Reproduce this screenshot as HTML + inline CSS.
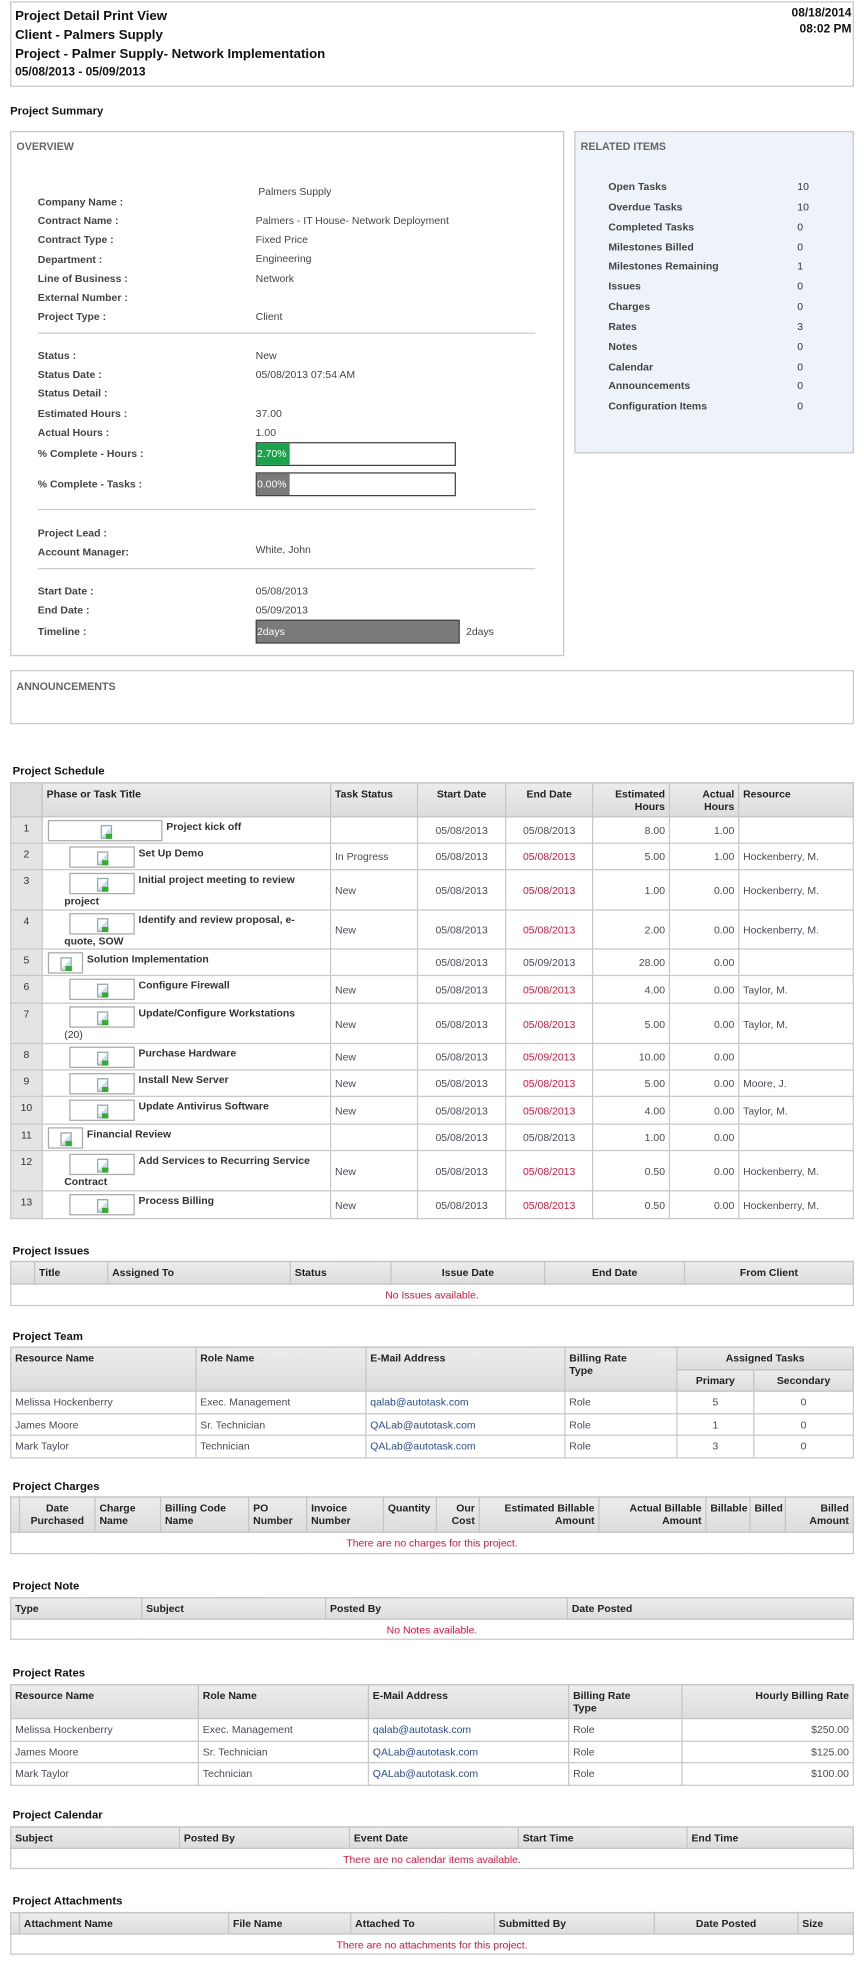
<!DOCTYPE html>
<html><head><meta charset="utf-8"><style>
*{box-sizing:border-box;margin:0;padding:0}
html,body{width:864px;height:1975px;overflow:hidden;background:#fff}
#w{position:absolute;left:0;top:0;width:686px;height:1568px;transform:scale(1.2595);transform-origin:0 0;font-family:"Liberation Sans",sans-serif;font-size:8.3px;color:#444}
.a{position:absolute;white-space:nowrap}
.b{font-weight:bold}
.box{position:absolute;border:1px solid #c8c8c8}
.h{position:absolute;left:10px;font-weight:bold;font-size:9px;color:#111}
table{position:absolute;left:8px;width:670px;border-collapse:collapse;table-layout:fixed;border:1px solid #bbb}
th{background:linear-gradient(#ececec,#dcdcdc);color:#222;font-weight:bold;text-align:left;vertical-align:top;padding:3px 3px;border:1px solid #c4c4c4;line-height:10px}
td{border:1px solid #c8c8c8;padding:0 3px;color:#4a4a55;vertical-align:middle}
.r{text-align:right}.c{text-align:center}
.red{color:#e0103a}
.lk{color:#2b4b8c}
.nd{background:#e4e4e4;color:#333;text-align:center;vertical-align:top;padding-top:3px}
.ib{display:inline-block;width:52px;height:17px;border:1px solid #aaa;vertical-align:top;position:relative;margin-right:3px;background:#fff}
.ib i{position:absolute;left:50%;top:3px;width:9px;height:11px;margin-left:-4px;border:1px solid #9aa;background:linear-gradient(135deg,#fff 50%,#cde 50%)}
.ib i:after{content:"";position:absolute;right:-1px;bottom:-1px;width:5px;height:4px;background:#3a3}
.tt{font-weight:bold;color:#333;vertical-align:top;padding-top:2px;line-height:11px}
.sc td{font-size:8.3px}
</style></head><body><div id="w">

<div class="box" style="left:8px;top:1px;width:670px;height:68px"></div>
<div class="a b" style="left:12px;top:6px;font-size:10.5px;color:#111;line-height:15px">Project Detail Print View<br>Client - Palmers Supply<br>Project - Palmer Supply- Network Implementation</div>
<div class="a b" style="left:12px;top:52px;font-size:9.5px;color:#111">05/08/2013 - 05/09/2013</div>
<div class="a b" style="right:10px;top:4px;font-size:9.5px;color:#111;text-align:right;line-height:13px">08/18/2014<br>08:02 PM</div>

<div class="h" style="left:8px;top:83px">Project Summary</div>

<div class="box" style="left:8px;top:104px;width:440px;height:417px"></div>
<div class="a b" style="left:13px;top:111px;color:#666;font-size:8.5px">OVERVIEW</div>
<div class="a b" style="left:30px;top:153px;line-height:15.2px">Company Name :<br>Contract Name :<br>Contract Type :<br>Department :<br>Line of Business :<br>External Number :<br>Project Type :</div>
<div class="a" style="left:205px;top:147px">Palmers Supply</div>
<div class="a" style="left:203px;top:168px;line-height:15.2px">Palmers - IT House- Network Deployment<br>Fixed Price<br>Engineering<br>Network<br><br>Client</div>
<div class="a" style="left:30px;top:264px;width:395px;border-top:1px solid #ccc"></div>
<div class="a b" style="left:30px;top:275px;line-height:15.2px">Status :<br>Status Date :<br>Status Detail :<br>Estimated Hours :<br>Actual Hours :</div>
<div class="a" style="left:203px;top:275px;line-height:15.2px">New<br>05/08/2013 07:54 AM<br><br>37.00<br>1.00</div>
<div class="a b" style="left:30px;top:355px">% Complete - Hours :</div>
<div class="a" style="left:203px;top:351px;width:159px;height:19px;border:1px solid #444;background:#fff"><div style="width:26px;height:17px;background:#1aa34a;color:#fff;line-height:17px">2.70%</div></div>
<div class="a b" style="left:30px;top:379px">% Complete - Tasks :</div>
<div class="a" style="left:203px;top:375px;width:159px;height:19px;border:1px solid #444;background:#fff"><div style="width:26px;height:17px;background:#7a7a7a;color:#fff;line-height:17px">0.00%</div></div>
<div class="a" style="left:30px;top:404px;width:395px;border-top:1px solid #ccc"></div>
<div class="a b" style="left:30px;top:416px;line-height:15.2px">Project Lead :<br>Account Manager:</div>
<div class="a" style="left:203px;top:431px">White, John</div>
<div class="a" style="left:30px;top:451px;width:395px;border-top:1px solid #ccc"></div>
<div class="a b" style="left:30px;top:462px;line-height:15.2px">Start Date :<br>End Date :</div>
<div class="a" style="left:203px;top:462px;line-height:15.2px">05/08/2013<br>05/09/2013</div>
<div class="a b" style="left:30px;top:496px">Timeline :</div>
<div class="a" style="left:203px;top:492px;width:162px;height:19px;border:1px solid #444;background:#7a7a7a;color:#fff;line-height:17px">2days</div>
<div class="a" style="left:370px;top:496px">2days</div>

<div class="box" style="left:456px;top:104px;width:222px;height:256px;background:#eef3fa"></div>
<div class="a b" style="left:461px;top:111px;color:#666;font-size:8.5px">RELATED ITEMS</div>
<div class="a b" style="left:483px;top:141px;line-height:15.85px">Open Tasks<br>Overdue Tasks<br>Completed Tasks<br>Milestones Billed<br>Milestones Remaining<br>Issues<br>Charges<br>Rates<br>Notes<br>Calendar<br>Announcements<br>Configuration Items</div>
<div class="a" style="left:633px;top:141px;line-height:15.85px;color:#333">10<br>10<br>0<br>0<br>1<br>0<br>0<br>3<br>0<br>0<br>0<br>0</div>

<div class="box" style="left:8px;top:532px;width:670px;height:43px"></div>
<div class="a b" style="left:13px;top:540px;color:#666;font-size:8.5px">ANNOUNCEMENTS</div>

<div class="h" style="top:607px">Project Schedule</div>
<table class="sc" style="top:621px">
<colgroup><col style="width:25px"><col style="width:229px"><col style="width:69px"><col style="width:70px"><col style="width:69px"><col style="width:61px"><col style="width:55px"><col></colgroup>
<tr style="height:27px"><th style="background:#ddd"></th><th>Phase or Task Title</th><th>Task Status</th><th class="c">Start Date</th><th class="c">End Date</th><th class="r">Estimated Hours</th><th class="r">Actual Hours</th><th>Resource</th></tr>
<tr style="height:21px"><td class="nd">1</td><td class="tt" style="padding-left:4px"><span class="ib" style="width:91px"><i></i></span>Project kick off</td><td></td><td class="c">05/08/2013</td><td class="c">05/08/2013</td><td class="r">8.00</td><td class="r">1.00</td><td></td></tr>
<tr style="height:21px"><td class="nd">2</td><td class="tt" style="padding-left:21px"><span class="ib"><i></i></span>Set Up Demo</td><td>In Progress</td><td class="c">05/08/2013</td><td class="c red">05/08/2013</td><td class="r">5.00</td><td class="r">1.00</td><td>Hockenberry, M.</td></tr>
<tr style="height:32px"><td class="nd">3</td><td class="tt" style="padding-left:21px"><span class="ib"><i></i></span>Initial project meeting to review<br><span style="margin-left:-4px">project</span></td><td>New</td><td class="c">05/08/2013</td><td class="c red">05/08/2013</td><td class="r">1.00</td><td class="r">0.00</td><td>Hockenberry, M.</td></tr>
<tr style="height:31px"><td class="nd">4</td><td class="tt" style="padding-left:21px"><span class="ib"><i></i></span>Identify and review proposal, e-<br><span style="margin-left:-4px">quote, SOW</span></td><td>New</td><td class="c">05/08/2013</td><td class="c red">05/08/2013</td><td class="r">2.00</td><td class="r">0.00</td><td>Hockenberry, M.</td></tr>
<tr style="height:21px"><td class="nd">5</td><td class="tt" style="padding-left:4px"><span class="ib" style="width:28px"><i></i></span>Solution Implementation</td><td></td><td class="c">05/08/2013</td><td class="c">05/09/2013</td><td class="r">28.00</td><td class="r">0.00</td><td></td></tr>
<tr style="height:22px"><td class="nd">6</td><td class="tt" style="padding-left:21px"><span class="ib"><i></i></span>Configure Firewall</td><td>New</td><td class="c">05/08/2013</td><td class="c red">05/08/2013</td><td class="r">4.00</td><td class="r">0.00</td><td>Taylor, M.</td></tr>
<tr style="height:32px"><td class="nd">7</td><td class="tt" style="padding-left:21px"><span class="ib"><i></i></span>Update/Configure Workstations<br><span style="margin-left:-4px;font-weight:normal">(20)</span></td><td>New</td><td class="c">05/08/2013</td><td class="c red">05/08/2013</td><td class="r">5.00</td><td class="r">0.00</td><td>Taylor, M.</td></tr>
<tr style="height:21px"><td class="nd">8</td><td class="tt" style="padding-left:21px"><span class="ib"><i></i></span>Purchase Hardware</td><td>New</td><td class="c">05/08/2013</td><td class="c red">05/09/2013</td><td class="r">10.00</td><td class="r">0.00</td><td></td></tr>
<tr style="height:21px"><td class="nd">9</td><td class="tt" style="padding-left:21px"><span class="ib"><i></i></span>Install New Server</td><td>New</td><td class="c">05/08/2013</td><td class="c red">05/08/2013</td><td class="r">5.00</td><td class="r">0.00</td><td>Moore, J.</td></tr>
<tr style="height:22px"><td class="nd">10</td><td class="tt" style="padding-left:21px"><span class="ib"><i></i></span>Update Antivirus Software</td><td>New</td><td class="c">05/08/2013</td><td class="c red">05/08/2013</td><td class="r">4.00</td><td class="r">0.00</td><td>Taylor, M.</td></tr>
<tr style="height:21px"><td class="nd">11</td><td class="tt" style="padding-left:4px"><span class="ib" style="width:28px"><i></i></span>Financial Review</td><td></td><td class="c">05/08/2013</td><td class="c">05/08/2013</td><td class="r">1.00</td><td class="r">0.00</td><td></td></tr>
<tr style="height:32px"><td class="nd">12</td><td class="tt" style="padding-left:21px"><span class="ib"><i></i></span>Add Services to Recurring Service<br><span style="margin-left:-4px">Contract</span></td><td>New</td><td class="c">05/08/2013</td><td class="c red">05/08/2013</td><td class="r">0.50</td><td class="r">0.00</td><td>Hockenberry, M.</td></tr>
<tr style="height:22px"><td class="nd">13</td><td class="tt" style="padding-left:21px"><span class="ib"><i></i></span>Process Billing</td><td>New</td><td class="c">05/08/2013</td><td class="c red">05/08/2013</td><td class="r">0.50</td><td class="r">0.00</td><td>Hockenberry, M.</td></tr>
</table>

<div class="h" style="top:988px">Project Issues</div>
<table style="top:1001px">
<colgroup><col style="width:19px"><col style="width:58px"><col style="width:145px"><col style="width:80px"><col style="width:122px"><col style="width:111px"><col></colgroup>
<tr style="height:18px"><th></th><th>Title</th><th>Assigned To</th><th>Status</th><th class="c">Issue Date</th><th class="c">End Date</th><th class="c">From Client</th></tr>
<tr style="height:17px"><td colspan="7" class="c red">No Issues available.</td></tr>
</table>

<div class="h" style="top:1056px">Project Team</div>
<table style="top:1069px">
<colgroup><col style="width:147px"><col style="width:135px"><col style="width:158px"><col style="width:89px"><col style="width:61px"><col></colgroup>
<tr style="height:18px"><th rowspan="2">Resource Name</th><th rowspan="2">Role Name</th><th rowspan="2">E-Mail Address</th><th rowspan="2">Billing Rate<br>Type</th><th colspan="2" class="c">Assigned Tasks</th></tr>
<tr style="height:16px"><th class="c">Primary</th><th class="c">Secondary</th></tr>
<tr style="height:17.5px"><td>Melissa Hockenberry</td><td>Exec. Management</td><td class="lk">qalab@autotask.com</td><td>Role</td><td class="c">5</td><td class="c">0</td></tr>
<tr style="height:17.5px"><td>James Moore</td><td>Sr. Technician</td><td class="lk">QALab@autotask.com</td><td>Role</td><td class="c">1</td><td class="c">0</td></tr>
<tr style="height:17.5px"><td>Mark Taylor</td><td>Technician</td><td class="lk">QALab@autotask.com</td><td>Role</td><td class="c">3</td><td class="c">0</td></tr>
</table>

<div class="h" style="top:1175px">Project Charges</div>
<table style="top:1188px">
<colgroup><col style="width:7px"><col style="width:60px"><col style="width:52px"><col style="width:70px"><col style="width:46px"><col style="width:61px"><col style="width:42px"><col style="width:34px"><col style="width:95px"><col style="width:85px"><col style="width:35px"><col style="width:28px"><col></colgroup>
<tr style="height:28px"><th></th><th class="c">Date Purchased</th><th>Charge Name</th><th>Billing Code Name</th><th>PO Number</th><th>Invoice Number</th><th>Quantity</th><th class="r">Our Cost</th><th class="r">Estimated Billable Amount</th><th class="r">Actual Billable Amount</th><th>Billable</th><th>Billed</th><th class="r">Billed Amount</th></tr>
<tr style="height:17px"><td colspan="13" class="c red">There are no charges for this project.</td></tr>
</table>

<div class="h" style="top:1254px">Project Note</div>
<table style="top:1268px">
<colgroup><col style="width:104px"><col style="width:146px"><col style="width:192px"><col></colgroup>
<tr style="height:17px"><th>Type</th><th>Subject</th><th>Posted By</th><th>Date Posted</th></tr>
<tr style="height:16px"><td colspan="4" class="c red">No Notes available.</td></tr>
</table>

<div class="h" style="top:1323px">Project Rates</div>
<table style="top:1337px">
<colgroup><col style="width:149px"><col style="width:135px"><col style="width:159px"><col style="width:90px"><col></colgroup>
<tr style="height:27px"><th>Resource Name</th><th>Role Name</th><th>E-Mail Address</th><th>Billing Rate<br>Type</th><th class="r">Hourly Billing Rate</th></tr>
<tr style="height:17.5px"><td>Melissa Hockenberry</td><td>Exec. Management</td><td class="lk">qalab@autotask.com</td><td>Role</td><td class="r">$250.00</td></tr>
<tr style="height:17.5px"><td>James Moore</td><td>Sr. Technician</td><td class="lk">QALab@autotask.com</td><td>Role</td><td class="r">$125.00</td></tr>
<tr style="height:17.5px"><td>Mark Taylor</td><td>Technician</td><td class="lk">QALab@autotask.com</td><td>Role</td><td class="r">$100.00</td></tr>
</table>

<div class="h" style="top:1436px">Project Calendar</div>
<table style="top:1450px">
<colgroup><col style="width:134px"><col style="width:135px"><col style="width:134px"><col style="width:134px"><col></colgroup>
<tr style="height:17px"><th>Subject</th><th>Posted By</th><th>Event Date</th><th>Start Time</th><th>End Time</th></tr>
<tr style="height:16px"><td colspan="5" class="c red">There are no calendar items available.</td></tr>
</table>

<div class="h" style="top:1504px">Project Attachments</div>
<table style="top:1518px">
<colgroup><col style="width:7px"><col style="width:166px"><col style="width:97px"><col style="width:114px"><col style="width:127px"><col style="width:114px"><col></colgroup>
<tr style="height:17px"><th></th><th>Attachment Name</th><th>File Name</th><th>Attached To</th><th>Submitted By</th><th class="c">Date Posted</th><th>Size</th></tr>
<tr style="height:16px"><td colspan="7" class="c red">There are no attachments for this project.</td></tr>
</table>

</div></body></html>
